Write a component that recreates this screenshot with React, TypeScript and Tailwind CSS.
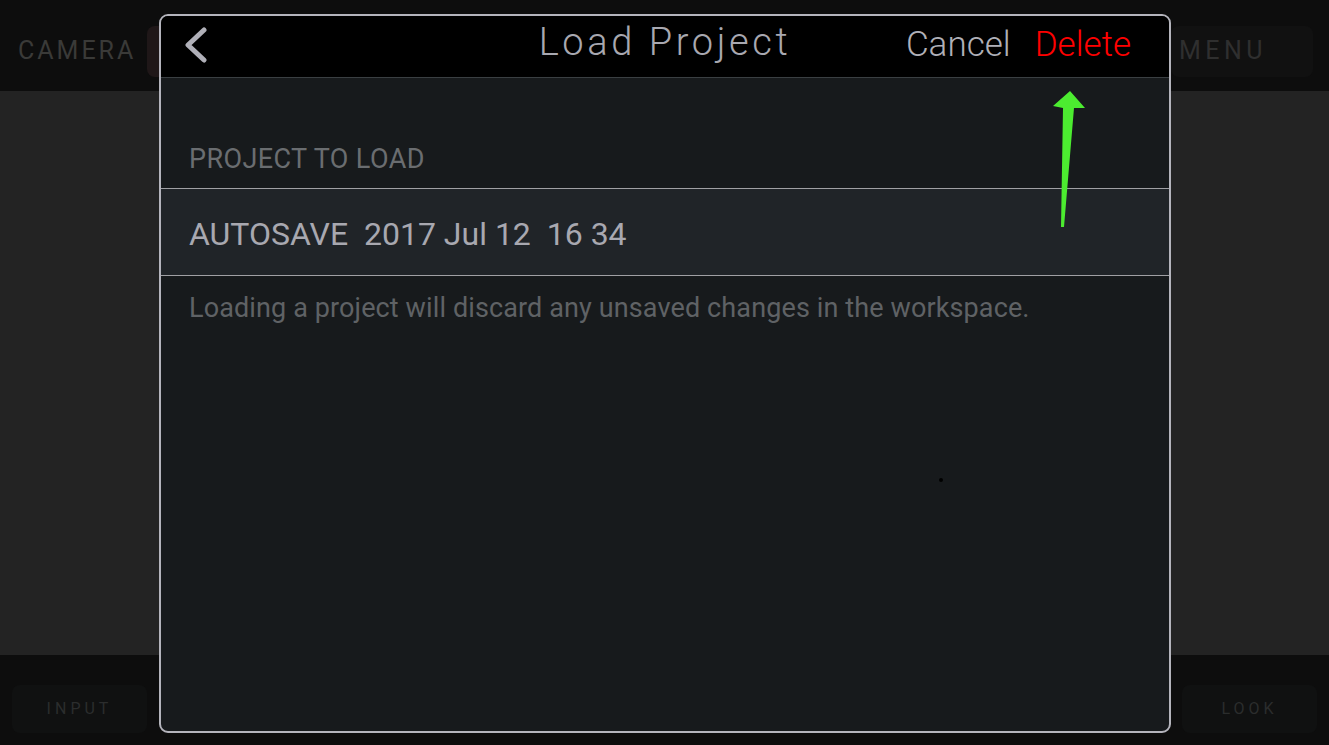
import React from "react";

export default function App() {
  const font = { fontFamily: "Roboto, 'Open Sans', sans-serif" } as React.CSSProperties;
  return (
    <div className="relative w-full h-[745px] flex flex-col overflow-hidden bg-[#0d0d0d]" style={font}>
      {/* top bar */}
      <div className="h-[91px] bg-[#0d0d0d] flex items-center pl-[12px] pr-[16px] pt-[11px] justify-between">
        <div className="flex items-center gap-[11px]">
          <div className="text-[25px] tracking-[3px] text-[#3a3a38] pl-[6px]">CAMERA</div>
          <div className="w-[120px] h-[51px] rounded-[8px] bg-[#1f1718]" />
        </div>
        <div className="w-[142px] h-[51px] rounded-[8px] bg-[#111111] flex items-center pl-[8px] text-[25px] tracking-[4.5px] text-[#2f2f2f]">
          MENU
        </div>
      </div>
      {/* middle */}
      <div className="flex-1 bg-[#232323]" />
      {/* bottom bar */}
      <div className="h-[90px] bg-[#0d0d0d] flex items-center justify-between px-[12px] pt-[17px]">
        <div className="w-[135px] h-[48px] rounded-[8px] bg-[#101111] flex items-center justify-center text-[16px] tracking-[4px] text-[#2b2d2d]">
          INPUT
        </div>
        <div className="w-[135px] h-[48px] rounded-[8px] bg-[#101111] flex items-center justify-center text-[16px] tracking-[4px] text-[#2b2d2d]">
          LOOK
        </div>
      </div>

      {/* modal */}
      <div className="absolute left-[159px] top-[14px] w-[1012px] h-[719px] rounded-[9px] border-2 border-[#b4b4bc] bg-[#171a1c] overflow-hidden flex flex-col">
        <div className="h-[62px] shrink-0 bg-black border-b border-[#3a3f42] relative flex items-center">
          <svg className="absolute left-[21px] top-[11px]" width="26" height="36" viewBox="0 0 26 36">
            <path d="M22 3 L6 18 L22 33" fill="none" stroke="#b0b0b8" strokeWidth="5" strokeLinecap="round" strokeLinejoin="round" />
          </svg>
          <div className="absolute left-0 right-0 top-0 bottom-[8px] flex items-center justify-center pointer-events-none">
            <span className="text-[38px] tracking-[3.6px] text-[#a8a8b0] font-light">Load Project</span>
          </div>
          <div className="ml-auto flex items-center gap-[24px] pr-[38px] pb-[2px] text-[35px]">
            <span className="text-[#b0b0b8] font-light">Cancel</span>
            <span className="text-[#ff0000] font-light">Delete</span>
          </div>
        </div>
        <div className="pt-[62px] pl-[28px] pb-[9px] text-[27px] tracking-[0.4px] leading-[39px] text-[#6a6d70]">PROJECT TO LOAD</div>
        <div className="h-[88px] shrink-0 border-y border-[#a0a0a4] bg-[#202428] flex items-center pl-[28px] pt-[4px] text-[32px] text-[#a8a8b0] whitespace-pre">
          AUTOSAVE  2017 Jul 12  16 34
        </div>
        <div className="pt-[12px] pl-[28px] text-[27px] tracking-[0.12px] leading-[40px] text-[#5f6265]">
          Loading a project will discard any unsaved changes in the workspace.
        </div>
      </div>

      {/* stray dot */}
      <div className="absolute left-[939px] top-[478px] w-[4px] h-[4px] rounded-full bg-black" />

      {/* green arrow */}
      <svg className="absolute left-0 top-0" width="1329" height="745" viewBox="0 0 1329 745" style={{ pointerEvents: "none" }}>
        <polygon points="1070,91 1085,108 1074,108 1064,227 1061,227 1063,108 1053,106" fill="#4cec30" />
      </svg>
    </div>
  );
}
